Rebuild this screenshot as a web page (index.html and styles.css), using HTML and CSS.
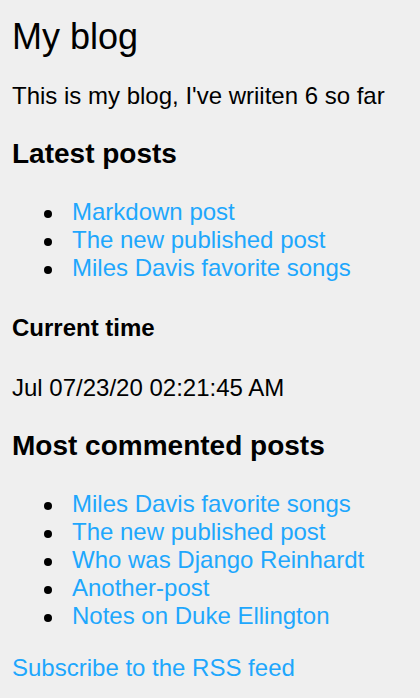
FILE: index.html
```html
<!DOCTYPE html>
<html>
<head>
<meta charset="utf-8">
<title>My blog</title>
<link rel="stylesheet" href="styles.css">
</head>
<body>
<h1 class="title">My blog</h1>
<p class="text">This is my blog, I've wriiten 6 so far</p>
<h2 class="section">Latest posts</h2>
<ul class="posts">
<li class="item"><a class="link" href="#">Markdown post</a></li>
<li class="item"><a class="link" href="#">The new published post</a></li>
<li class="item"><a class="link" href="#">Miles Davis favorite songs</a></li>
</ul>
<h4 class="sub">Current time</h4>
<p class="text">Jul 07/23/20 02:21:45 AM</p>
<h2 class="section">Most commented posts</h2>
<ul class="posts">
<li class="item"><a class="link" href="#">Miles Davis favorite songs</a></li>
<li class="item"><a class="link" href="#">The new published post</a></li>
<li class="item"><a class="link" href="#">Who was Django Reinhardt</a></li>
<li class="item"><a class="link" href="#">Another-post</a></li>
<li class="item"><a class="link" href="#">Notes on Duke Ellington</a></li>
</ul>
<p class="text"><a class="link" href="#">Subscribe to the RSS feed</a></p>
</body>
</html>
```
FILE: styles.css
```css
html {
  background: #efefef;
}
body {
  margin: 0;
  padding: 0 12px;
  font-family: "Liberation Sans", Arial, Helvetica, sans-serif;
  font-size: 24px;
  color: #000;
}
.title {
  font-size: 36px;
  font-weight: normal;
  margin: 16px 0 24px;
}
.text {
  margin: 24px 0;
}
.section {
  font-size: 28px;
  font-weight: bold;
  margin: 28px 0;
}
.sub {
  font-size: 24px;
  font-weight: bold;
  margin: 32px 0;
}
.posts {
  margin: 24px 0;
  padding-left: 60px;
  list-style: none;
}
.item::before {
  content: "";
  display: inline-block;
  width: 8px;
  height: 8px;
  border-radius: 50%;
  background: #000;
  margin-left: -28px;
  margin-right: 20px;
  vertical-align: 2px;
}
.link {
  color: #1ea7fd;
  text-decoration: none;
}
```
